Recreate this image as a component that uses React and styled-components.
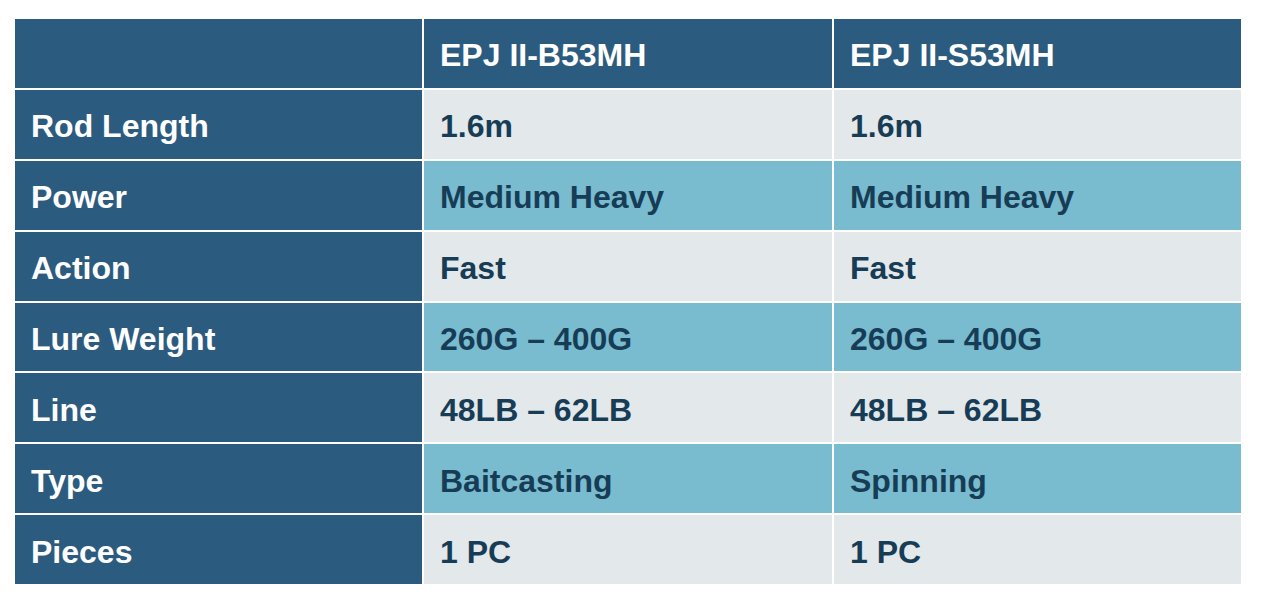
import React from "react";
import styled, { createGlobalStyle } from "styled-components";

const Global = createGlobalStyle`
  html, body { margin: 0; padding: 0; background: #ffffff; }
  body { font-family: "Liberation Sans", Arial, sans-serif; }
`;

const Page = styled.div`
  padding: 19px 0 0 15px;
`;

const Table = styled.div`
  display: grid;
  width: 1226px;
  height: 565px;
  grid-template-columns: 407px 1fr 407px;
  grid-template-rows: repeat(8, 1fr);
  gap: 2px;
  background: #ffffff;
`;

const Cell = styled.div`
  display: flex;
  align-items: center;
  padding: 4px 0 0 16px;
  font-family: "Liberation Sans", Arial, sans-serif;
  font-weight: 700;
  font-size: 32px;
  line-height: 1;
  background: ${(p) =>
    p.$kind === "head" ? "#2c5b80" : p.$kind === "alt" ? "#79bbcf" : "#e3e8eb"};
  color: ${(p) => (p.$kind === "head" ? "#ffffff" : "#173d56")};
  white-space: nowrap;
`;

const models = ["EPJ II-B53MH", "EPJ II-S53MH"];

const rows = [
  ["Rod Length", "1.6m", "1.6m"],
  ["Power", "Medium Heavy", "Medium Heavy"],
  ["Action", "Fast", "Fast"],
  ["Lure Weight", "260G – 400G", "260G – 400G"],
  ["Line", "48LB – 62LB", "48LB – 62LB"],
  ["Type", "Baitcasting", "Spinning"],
  ["Pieces", "1 PC", "1 PC"],
];

export default function App() {
  return (
    <>
      <Global />
      <Page>
        <Table>
          <Cell $kind="head" />
          {models.map((m) => (
            <Cell key={m} $kind="head">
              {m}
            </Cell>
          ))}
          {rows.map((r, i) => (
            <React.Fragment key={r[0]}>
              <Cell $kind="head">{r[0]}</Cell>
              <Cell $kind={i % 2 === 1 ? "alt" : "plain"}>{r[1]}</Cell>
              <Cell $kind={i % 2 === 1 ? "alt" : "plain"}>{r[2]}</Cell>
            </React.Fragment>
          ))}
        </Table>
      </Page>
    </>
  );
}
